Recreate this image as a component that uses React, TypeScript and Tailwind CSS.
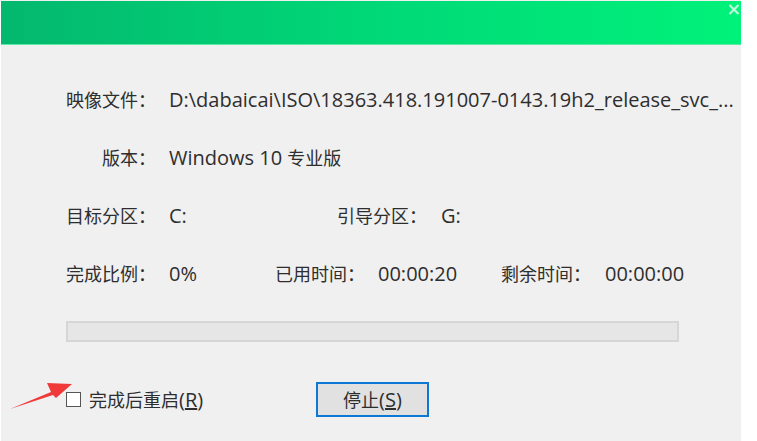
import React from 'react';

const font = { fontFamily: '"Open Sans", "Noto Sans CJK SC", sans-serif' };

// CJK labels render at 18px, Latin values at 20px (matches the original widths)
const Label: React.FC<{ children: React.ReactNode; className?: string }> = ({ children, className = '' }) => (
  <span className={`shrink-0 text-[18px] ${className}`}>{children}</span>
);

export default function App() {
  return (
    <div className="relative w-[757px] h-[441px] bg-white overflow-hidden text-[#2e2e2e] text-[20px] leading-none" style={font}>
      <div className="ml-[1px] w-[740px] h-full bg-[#f0f0f0] flex flex-col">
        {/* title bar */}
        <div className="relative mt-[1px] h-[44px] bg-gradient-to-r from-[#04b86e] via-[#00d877] to-[#00f27a] border-b border-[#5fe9a6]">
          <svg className="absolute right-[1px] top-[3px]" width="12" height="11" viewBox="0 0 12 11">
            <path d="M1.5 1 L10.5 10 M10.5 1 L1.5 10" stroke="rgba(255,255,255,0.75)" strokeWidth="2.2" />
          </svg>
        </div>

        {/* info rows */}
        <div className="pl-[65px] pt-[26px] flex flex-col">
          <div className="h-[58px] flex items-center">
            <Label className="w-[103px]">映像文件：</Label>
            <span className="whitespace-nowrap">D:\dabaicai\ISO\18363.418.191007-0143.19h2_release_svc_...</span>
          </div>
          <div className="h-[58px] flex items-center">
            <Label className="w-[90px] text-right mr-[13px]">版本：</Label>
            <span>Windows 10 <span className="text-[18px]">专业版</span></span>
          </div>
          <div className="h-[58px] flex items-center">
            <Label className="w-[103px]">目标分区：</Label>
            <span className="w-[168px]">C:</span>
            <Label className="w-[104px]">引导分区：</Label>
            <span>G:</span>
          </div>
          <div className="h-[58px] flex items-center">
            <Label className="w-[103px]">完成比例：</Label>
            <span className="w-[106px]">0%</span>
            <Label className="w-[103px]">已用时间：</Label>
            <span className="w-[123px]">00:00:20</span>
            <Label className="w-[104px]">剩余时间：</Label>
            <span>00:00:00</span>
          </div>

          {/* progress bar */}
          <div className="mt-[18px] w-[613px] h-[21px] border-2 border-[#d6d6d6] bg-[#e6e6e6]" />

          {/* bottom controls */}
          <div className="mt-[40px] flex items-center">
            <label className="flex items-center gap-[8px] w-[250px]">
              <span className="w-[15px] h-[15px] border-[1.5px] border-[#555] bg-white" />
              <span><span className="text-[18px]">完成后重启</span>(<span className="underline">R</span>)</span>
            </label>
            <button className="w-[113px] h-[35px] border-2 border-[#0c78d6] bg-[#e1e1e1] flex items-center justify-center">
              <span><span className="text-[18px]">停止</span>(<span className="underline">S</span>)</span>
            </button>
          </div>
        </div>
      </div>

      {/* red annotation arrow */}
      <svg className="absolute left-0 top-[378px]" width="80" height="36" viewBox="0 0 80 36">
        <path d="M10 31 L51 14 L47 5 L72 6 L56 20 L53 17 Z" fill="#f03a3a" />
      </svg>
    </div>
  );
}
